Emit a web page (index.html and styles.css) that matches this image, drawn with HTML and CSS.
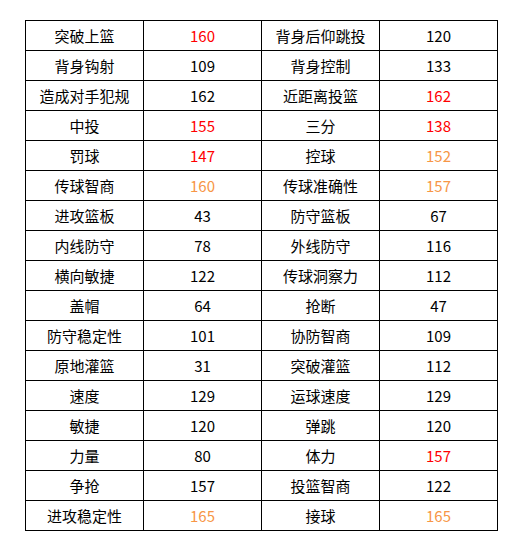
FILE: index.html
```html
<!DOCTYPE html>
<html lang="zh">
<head>
<meta charset="utf-8">
<link rel="stylesheet" href="styles.css">
</head>
<body>
<div class="grid">
  <div class="c">突破上篮</div><div class="c red">160</div><div class="c">背身后仰跳投</div><div class="c">120</div>
  <div class="c">背身钩射</div><div class="c">109</div><div class="c">背身控制</div><div class="c">133</div>
  <div class="c">造成对手犯规</div><div class="c">162</div><div class="c">近距离投篮</div><div class="c red">162</div>
  <div class="c">中投</div><div class="c red">155</div><div class="c">三分</div><div class="c red">138</div>
  <div class="c">罚球</div><div class="c red">147</div><div class="c">控球</div><div class="c orange">152</div>
  <div class="c">传球智商</div><div class="c orange">160</div><div class="c">传球准确性</div><div class="c orange">157</div>
  <div class="c">进攻篮板</div><div class="c">43</div><div class="c">防守篮板</div><div class="c">67</div>
  <div class="c">内线防守</div><div class="c">78</div><div class="c">外线防守</div><div class="c">116</div>
  <div class="c">横向敏捷</div><div class="c">122</div><div class="c">传球洞察力</div><div class="c">112</div>
  <div class="c">盖帽</div><div class="c">64</div><div class="c">抢断</div><div class="c">47</div>
  <div class="c">防守稳定性</div><div class="c">101</div><div class="c">协防智商</div><div class="c">109</div>
  <div class="c">原地灌篮</div><div class="c">31</div><div class="c">突破灌篮</div><div class="c">112</div>
  <div class="c">速度</div><div class="c">129</div><div class="c">运球速度</div><div class="c">129</div>
  <div class="c">敏捷</div><div class="c">120</div><div class="c">弹跳</div><div class="c">120</div>
  <div class="c">力量</div><div class="c">80</div><div class="c">体力</div><div class="c red">157</div>
  <div class="c">争抢</div><div class="c">157</div><div class="c">投篮智商</div><div class="c">122</div>
  <div class="c">进攻稳定性</div><div class="c orange">165</div><div class="c">接球</div><div class="c orange">165</div>
</div>
</body>
</html>
```

FILE: styles.css
```css
html, body {
  margin: 0;
  padding: 0;
  background: #fff;
}
body {
  padding: 20px 0 0 25px;
  font-family: "Noto Sans CJK SC", "Noto Sans", sans-serif;
  font-size: 15px;
  color: #000;
}
.grid {
  display: grid;
  grid-template-columns: repeat(4, 117px);
  grid-auto-rows: 29px;
  gap: 1px;
  padding: 1px;
  background: #000;
  width: max-content;
}
.c {
  background: #fff;
  display: flex;
  align-items: center;
  justify-content: center;
  line-height: 1;
  white-space: nowrap;
}
.red { color: #ff0000; }
.orange { color: #f79646; }
```
